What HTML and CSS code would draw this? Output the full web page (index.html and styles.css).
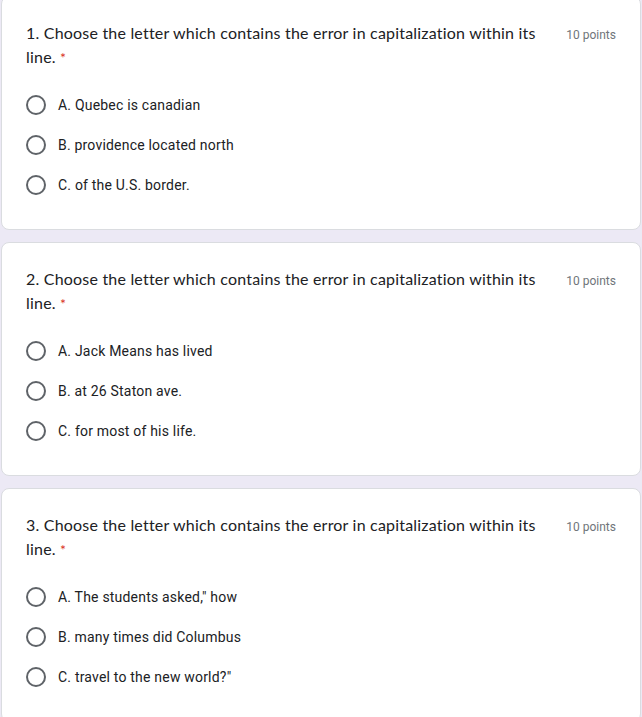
FILE: index.html
```html
<!DOCTYPE html>
<html lang="en">
<head>
<meta charset="utf-8">
<title>Quiz</title>
<link rel="stylesheet" href="styles.css">
</head>
<body>
<main class="form">
  <section class="card">
    <div class="q-head">
      <div class="q-title">1. Choose the letter which contains the error in capitalization within its line. <span class="req">*</span></div>
      <div class="q-points">10 points</div>
    </div>
    <ul class="options">
      <li class="option"><span class="radio"></span><span class="label">A. Quebec is canadian</span></li>
      <li class="option"><span class="radio"></span><span class="label">B. providence located north</span></li>
      <li class="option"><span class="radio"></span><span class="label">C. of the U.S. border.</span></li>
    </ul>
  </section>
  <section class="card">
    <div class="q-head">
      <div class="q-title">2. Choose the letter which contains the error in capitalization within its line. <span class="req">*</span></div>
      <div class="q-points">10 points</div>
    </div>
    <ul class="options">
      <li class="option"><span class="radio"></span><span class="label">A. Jack Means has lived</span></li>
      <li class="option"><span class="radio"></span><span class="label">B. at 26 Staton ave.</span></li>
      <li class="option"><span class="radio"></span><span class="label">C. for most of his life.</span></li>
    </ul>
  </section>
  <section class="card">
    <div class="q-head">
      <div class="q-title">3. Choose the letter which contains the error in capitalization within its line. <span class="req">*</span></div>
      <div class="q-points">10 points</div>
    </div>
    <ul class="options">
      <li class="option"><span class="radio"></span><span class="label">A. The students asked," how</span></li>
      <li class="option"><span class="radio"></span><span class="label">B. many times did Columbus</span></li>
      <li class="option"><span class="radio"></span><span class="label">C. travel to the new world?"</span></li>
    </ul>
  </section>
</main>
</body>
</html>
```

FILE: styles.css
```css
html, body {
  margin: 0;
  padding: 0;
  background: #ece9f5;
  overflow: hidden;
}

.form {
  display: flex;
  flex-direction: column;
  gap: 12px;
  margin: -4px 1px 0 1px;
}

.card {
  background: #ffffff;
  border: 1px solid #dadce0;
  border-radius: 8px;
  padding: 24px;
}

.q-head {
  display: flex;
  align-items: flex-start;
}

.q-title {
  flex: 1;
  font-family: "Lato", "Open Sans", sans-serif;
  font-size: 16px;
  line-height: 24px;
  color: #202124;
  letter-spacing: 0.2px;
}

.req {
  color: #d93025;
  font-size: 14px;
  line-height: 1;
}

.q-points {
  margin-left: 24px;
  padding-top: 2px;
  font-family: "Roboto", sans-serif;
  font-size: 12px;
  line-height: 24px;
  color: #70757a;
  white-space: nowrap;
}

.options {
  list-style: none;
  margin: 16px 0 0 0;
  padding: 0;
}

.option {
  display: flex;
  align-items: center;
  height: 40px;
}

.radio {
  width: 16px;
  height: 16px;
  border: 2px solid #5f6368;
  border-radius: 50%;
  flex: none;
}

.label {
  margin-left: 12px;
  font-family: "Roboto", sans-serif;
  font-size: 14px;
  letter-spacing: 0.2px;
  color: #202124;
}
```
